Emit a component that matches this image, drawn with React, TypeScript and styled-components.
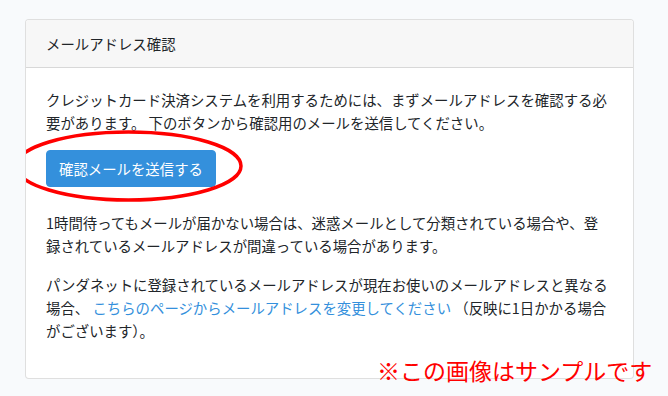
import styled, { createGlobalStyle } from "styled-components";

const GlobalStyle = createGlobalStyle`
  html, body {
    margin: 0;
    padding: 0;
    background: #f8fafc;
  }
  body {
    font-family: "Noto Sans CJK JP", "Noto Sans", sans-serif;
    font-size: 14.4px;
    line-height: 1.6;
    color: #212529;
  }
`;

const App = () => {
  return (
    <Page>
      <GlobalStyle />
      <Card>
        <CardHeader>メールアドレス確認</CardHeader>
        <CardBody>
          <Paragraph>
            クレジットカード決済システムを利用するためには、まずメールアドレスを確認する必要があります。 下のボタンから確認用のメールを送信してください。
          </Paragraph>
          <ButtonRow>
            <SendButton type="button">確認メールを送信する</SendButton>
            <Circle viewBox="0 0 229 72" aria-hidden="true">
              <ellipse cx="114.5" cy="36" rx="112.5" ry="34" />
            </Circle>
          </ButtonRow>
          <Paragraph>
            1時間待ってもメールが届かない場合は、迷惑メールとして分類されている場合や、登録されているメールアドレスが間違っている場合があります。
          </Paragraph>
          <Paragraph>
            パンダネットに登録されているメールアドレスが現在お使いのメールアドレスと異なる場合、{" "}
            <Link href="#">こちらのページからメールアドレスを変更してください</Link>{" "}
            （反映に1日かかる場合がございます）。
          </Paragraph>
        </CardBody>
      </Card>
      <SampleNote>※この画像はサンプルです</SampleNote>
    </Page>
  );
};

const Page = styled.div`
  position: relative;
  width: 668px;
  height: 396px;
  box-sizing: border-box;
  padding: 19px 34px 0 25px;
  overflow: hidden;
`;

const Card = styled.div`
  background: #fff;
  border: 1px solid rgba(0, 0, 0, 0.125);
  border-radius: 4px;
  overflow: hidden;
`;

const CardHeader = styled.div`
  padding: 12px 20px;
  background: #f7f7f7;
  border-bottom: 1px solid rgba(0, 0, 0, 0.125);
`;

const CardBody = styled.div`
  padding: 20px 24px 20px 20px;
`;

const Paragraph = styled.p`
  margin: 0 0 16px;
`;

const ButtonRow = styled.div`
  position: relative;
  display: inline-block;
  margin: 0 0 24px;
`;

const SendButton = styled.button`
  display: block;
  font: inherit;
  color: #fff;
  background: #3490dc;
  border: 1px solid #3490dc;
  border-radius: 4px;
  padding: 6px 12px;
  cursor: pointer;
`;

const Circle = styled.svg`
  position: absolute;
  left: -32px;
  top: -20px;
  width: 229px;
  height: 72px;
  overflow: visible;
  pointer-events: none;

  ellipse {
    fill: none;
    stroke: #f00;
    stroke-width: 3.5;
  }
`;

const Link = styled.a`
  color: #3490dc;
  text-decoration: none;
`;

const SampleNote = styled.div`
  position: absolute;
  left: 377px;
  top: 356px;
  color: #f00;
  font-size: 23px;
  line-height: 1.3;
  white-space: nowrap;
`;

export default App;
